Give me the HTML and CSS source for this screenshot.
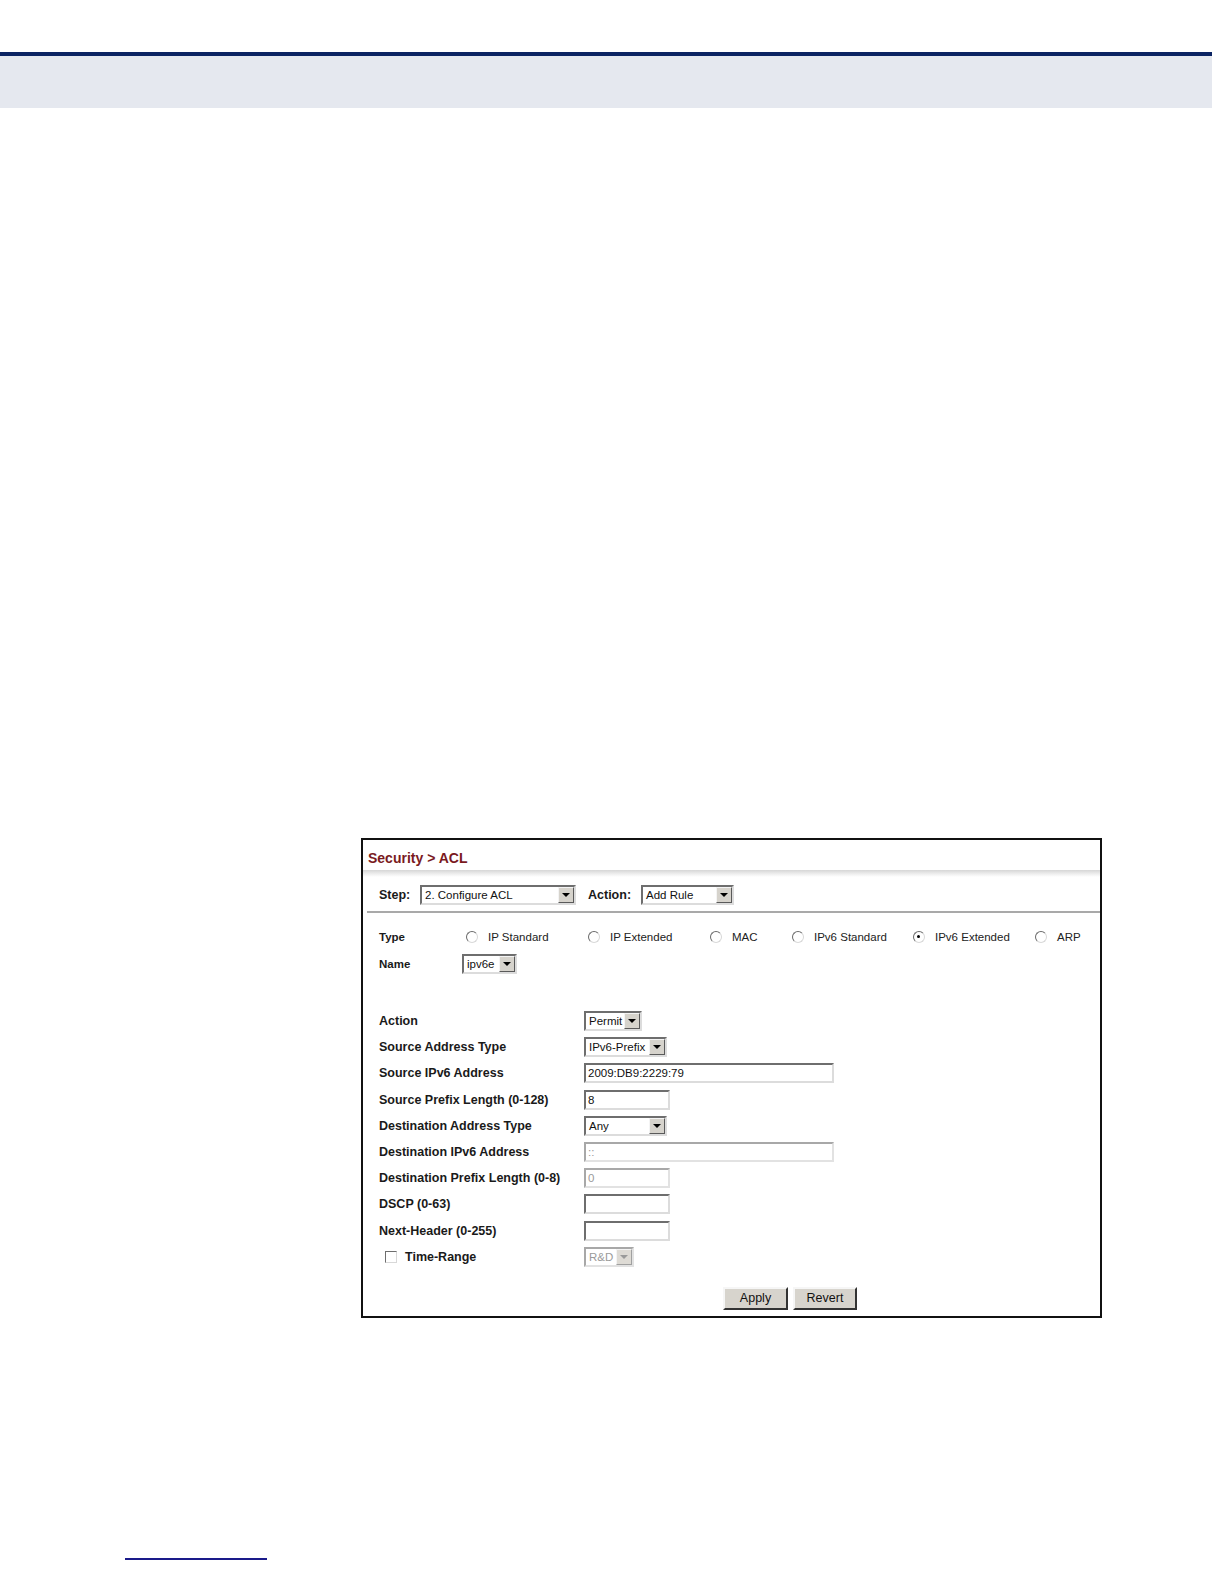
FILE: index.html
```html
<!DOCTYPE html>
<html>
<head>
<meta charset="utf-8">
<link rel="stylesheet" href="styles.css">
</head>
<body>
<div class="top-space"></div>
<div class="rule"></div>
<div class="band"></div>
<div class="gap"></div>

<div class="frame">
  <div class="title">Security &gt; ACL</div>
  <div class="shade"></div>
  <div class="steprow">
    <span class="blabel step-l">Step:</span>
    <span class="sel sel-step"><span class="val">2. Configure ACL</span><span class="arrow"></span></span>
    <span class="blabel act-l">Action:</span>
    <span class="sel sel-act"><span class="val">Add Rule</span><span class="arrow"></span></span>
  </div>
  <div class="sep"></div>

  <div class="typearea">
    <div class="trow">
      <span class="tlabel">Type</span>
      <span class="ropt w122"><span class="radio"></span><span class="rtext">IP Standard</span></span>
      <span class="ropt w122"><span class="radio"></span><span class="rtext">IP Extended</span></span>
      <span class="ropt w82"><span class="radio"></span><span class="rtext">MAC</span></span>
      <span class="ropt w121"><span class="radio"></span><span class="rtext">IPv6 Standard</span></span>
      <span class="ropt w122"><span class="radio on"></span><span class="rtext">IPv6 Extended</span></span>
      <span class="ropt"><span class="radio"></span><span class="rtext">ARP</span></span>
    </div>
    <div class="trow">
      <span class="tlabel nlabel">Name</span>
      <span class="sel sel-name"><span class="val">ipv6e</span><span class="arrow"></span></span>
    </div>
  </div>

  <div class="form">
    <div class="frow"><span class="flabel">Action</span><span class="sel sel-permit"><span class="val">Permit</span><span class="arrow"></span></span></div>
    <div class="frow"><span class="flabel">Source Address Type</span><span class="sel sel-type"><span class="val">IPv6-Prefix</span><span class="arrow"></span></span></div>
    <div class="frow"><span class="flabel">Source IPv6 Address</span><span class="inp inp-long">2009:DB9:2229:79</span></div>
    <div class="frow"><span class="flabel">Source Prefix Length (0-128)</span><span class="inp inp-short">8</span></div>
    <div class="frow"><span class="flabel">Destination Address Type</span><span class="sel sel-type"><span class="val">Any</span><span class="arrow"></span></span></div>
    <div class="frow"><span class="flabel">Destination IPv6 Address</span><span class="inp inp-long dis">::</span></div>
    <div class="frow"><span class="flabel">Destination Prefix Length (0-8)</span><span class="inp inp-short dis">0</span></div>
    <div class="frow"><span class="flabel">DSCP (0-63)</span><span class="inp inp-short"></span></div>
    <div class="frow"><span class="flabel">Next-Header (0-255)</span><span class="inp inp-short"></span></div>
    <div class="frow"><span class="flabel cblabel"><span class="check"></span>Time-Range</span><span class="sel sel-rd dis"><span class="val">R&amp;D</span><span class="arrow"></span></span></div>
  </div>

  <div class="buttons">
    <span class="btn btn-apply">Apply</span>
    <span class="btn btn-revert">Revert</span>
  </div>
</div>

<div class="foot-space"></div>
<div class="foot-rule"></div>
</body>
</html>
```
FILE: styles.css
```css
html, body {
  margin: 0;
  padding: 0;
  background: #ffffff;
  font-family: "Liberation Sans", Arial, sans-serif;
}

.top-space { height: 52px; }
.rule { height: 4px; width: 1212px; background: #0b2463; }
.band { height: 52px; width: 1212px; background: #e5e8ef; }
.gap { height: 730px; }

.frame {
  margin-left: 361px;
  width: 741px;
  height: 480px;
  box-sizing: border-box;
  border: 2px solid #111111;
  background: #ffffff;
}

.title {
  height: 30px;
  box-sizing: border-box;
  padding: 8px 0 0 5px;
  line-height: 20px;
  font-size: 14px;
  font-weight: bold;
  color: #7a1a1e;
}

.shade {
  height: 7px;
  background: linear-gradient(#d6d6d6, #f4f4f4 70%, #ffffff);
}

.steprow {
  height: 34px;
  box-sizing: border-box;
  padding: 2px 0 0 16px;
  display: flex;
  align-items: center;
}

.blabel {
  font-size: 12.5px;
  font-weight: bold;
  color: #1a1a1a;
}
.step-l { width: 41px; }
.act-l { margin-left: 12px; width: 53px; }

.sep {
  height: 2px;
  margin-left: 4px;
  background: #a9a9a9;
}

/* selects */
.sel {
  display: inline-flex;
  align-items: center;
  height: 20px;
  box-sizing: border-box;
  border: 2px solid;
  border-color: #6e6e6e #dcdcdc #dcdcdc #6e6e6e;
  background: #ffffff;
  font-size: 11.5px;
  color: #111111;
}
.sel .val {
  flex: 1;
  padding-left: 3px;
  white-space: nowrap;
  overflow: hidden;
}
.sel .arrow {
  position: relative;
  width: 16px;
  height: 16px;
  box-sizing: border-box;
  border: 1px solid;
  border-color: #f4f4f4 #5a5a5a #5a5a5a #f4f4f4;
  background: #d6d3cc;
}
.sel .arrow::after {
  content: "";
  position: absolute;
  left: 3px;
  top: 5px;
  border-left: 4px solid transparent;
  border-right: 4px solid transparent;
  border-top: 4px solid #000000;
}
.sel.dis { border-color: #a8a8a8 #e2e2e2 #e2e2e2 #a8a8a8; color: #9a9a9a; }
.sel.dis .arrow { border-color: #f4f4f4 #a0a0a0 #a0a0a0 #f4f4f4; background: #dedbd5; }
.sel.dis .arrow::after { border-top-color: #9a9a9a; }

.sel-step { width: 156px; }
.sel-act { width: 93px; }
.sel-name { width: 55px; }
.sel-permit { width: 58px; }
.sel-type { width: 83px; }
.sel-rd { width: 50px; }

/* type area */
.typearea {
  padding: 10px 0 0 16px;
  height: 63px;
  box-sizing: border-box;
}
.trow {
  height: 27px;
  display: flex;
  align-items: center;
}
.tlabel {
  width: 87px;
  font-size: 11.5px;
  font-weight: bold;
  color: #1a1a1a;
}
.nlabel { width: 83px; }
.ropt {
  display: flex;
  align-items: center;
}
.w122 { width: 122px; }
.w121 { width: 121px; }
.w82 { width: 82px; }

.radio {
  position: relative;
  width: 12px;
  height: 12px;
  box-sizing: border-box;
  border-radius: 50%;
  border: 1.5px solid;
  border-color: #6a6a6a #d8d8d8 #d8d8d8 #6a6a6a;
  background: #ffffff;
  margin-right: 10px;
}
.radio.on::after {
  content: "";
  position: absolute;
  left: 3px;
  top: 3px;
  width: 3px;
  height: 3px;
  border-radius: 50%;
  background: #000000;
}
.rtext {
  font-size: 11.5px;
  color: #222222;
  white-space: nowrap;
}

/* form */
.form {
  margin-top: 32px;
  padding-left: 16px;
}
.frow {
  height: 26.2px;
  display: flex;
  align-items: center;
}
.flabel {
  width: 205px;
  font-size: 12.5px;
  font-weight: bold;
  color: #1a1a1a;
  white-space: nowrap;
  display: flex;
  align-items: center;
}
.cblabel { padding-left: 6px; width: 199px; }
.check {
  width: 12px;
  height: 12px;
  box-sizing: border-box;
  border: 1.5px solid;
  border-color: #6e6e6e #d8d8d8 #d8d8d8 #6e6e6e;
  background: #ffffff;
  margin-right: 8px;
}

.inp {
  display: inline-flex;
  align-items: center;
  height: 20px;
  box-sizing: border-box;
  border: 2px solid;
  border-color: #6e6e6e #dcdcdc #dcdcdc #6e6e6e;
  background: #ffffff;
  padding-left: 2px;
  font-size: 11.5px;
  color: #111111;
}
.inp.dis { border-color: #a8a8a8 #e2e2e2 #e2e2e2 #a8a8a8; color: #9a9a9a; }
.inp-long { width: 250px; }
.inp-short { width: 86px; }

/* buttons */
.buttons {
  margin-top: 17px;
  padding-left: 360px;
  display: flex;
  gap: 5px;
}
.btn {
  display: inline-flex;
  align-items: center;
  justify-content: center;
  height: 23px;
  box-sizing: border-box;
  border: 2px solid;
  border-color: #f6f6f6 #333333 #333333 #f6f6f6;
  background: #d7d4cd;
  font-size: 12.5px;
  color: #111111;
}
.btn-apply { width: 65px; }
.btn-revert { width: 64px; }

.foot-space { height: 240px; }
.foot-rule {
  margin-left: 125px;
  width: 142px;
  height: 2px;
  background: #1a1a8a;
}
```
